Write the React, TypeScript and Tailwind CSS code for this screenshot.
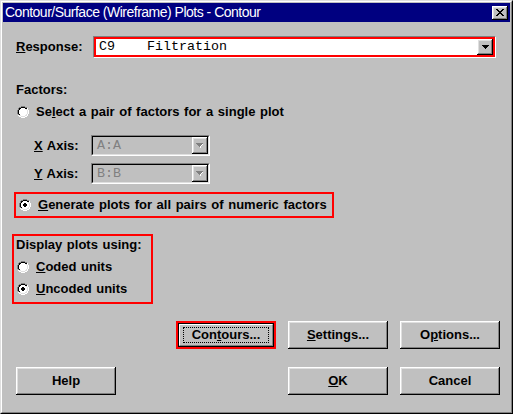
import type { ReactNode } from "react";

const pal: Record<string, string> = {
  G: "#808080",
  K: "#000000",
  W: "#ffffff",
  L: "#dfdfdf",
  H: "#ffffff",
};

function PixelArt({ map }: { map: string[] }) {
  const w = map[0].length;
  const h = map.length;
  const rects: ReactNode[] = [];
  map.forEach((row, y) =>
    row.split("").forEach((c, x) => {
      if (pal[c])
        rects.push(
          <rect key={`${x}-${y}`} x={x} y={y} width={1} height={1} fill={pal[c]} />
        );
    })
  );
  return (
    <svg
      width={w}
      height={h}
      viewBox={`0 0 ${w} ${h}`}
      shapeRendering="crispEdges"
      className="block shrink-0"
    >
      {rects}
    </svg>
  );
}

const radioOff = [
  "....GGGG....",
  "..GGKKKKGG..",
  ".GKKWWWWKKH.",
  ".GKWWWWWWLH.",
  "GKWWWWWWWWLH",
  "GKWWWWWWWWLH",
  "GKWWWWWWWWLH",
  "GKWWWWWWWWLH",
  ".GKWWWWWWLH.",
  ".HLLWWWWLLH.",
  "..HHLLLLHH..",
  "....HHHH....",
];

const radioOn = [
  "....GGGG....",
  "..GGKKKKGG..",
  ".GKKWWWWKKH.",
  ".GKWWWWWWLH.",
  "GKWWWKKWWWLH",
  "GKWWKKKKWWLH",
  "GKWWKKKKWWLH",
  "GKWWWKKWWWLH",
  ".GKWWWWWWLH.",
  ".HLLWWWWLLH.",
  "..HHLLLLHH..",
  "....HHHH....",
];

const closeX = [
  "KK....KK",
  ".KK..KK.",
  "..KKKK..",
  "...KK...",
  "..KKKK..",
  ".KK..KK.",
  "KK....KK",
];

const arrow = ["KKKKKKK", ".KKKKK.", "..KKK..", "...K..."];
const arrowOff = [
  "GGGGGGG.",
  ".GGGGGW.",
  "..GGGW..",
  "...GW...",
  "....W...",
];

const raised =
  "shadow-[inset_-1px_-1px_0_#000,inset_1px_1px_0_#fff,inset_-2px_-2px_0_#808080,inset_2px_2px_0_#dfdfdf]";
const raisedBtn =
  "shadow-[inset_-1px_-1px_0_#000,inset_1px_1px_0_#fff,inset_-2px_-2px_0_#808080,inset_2px_2px_0_#dfdfdf]";

function Radio({ checked }: { checked?: boolean }) {
  return <PixelArt map={checked ? radioOn : radioOff} />;
}

function DropBtn({ disabled }: { disabled?: boolean }) {
  return (
    <div
      className={`flex h-full w-[16px] shrink-0 items-center justify-center bg-[#c0c0c0] ${raised}`}
    >
      <PixelArt map={disabled ? arrowOff : arrow} />
    </div>
  );
}

function Combo({ value }: { value: string }) {
  return (
    <div className="h-[21px] w-[119px] border border-t-[#808080] border-l-[#808080] border-b-white border-r-white">
      <div className="flex h-full border border-t-black border-l-black border-b-[#dfdfdf] border-r-[#dfdfdf] bg-[#c0c0c0]">
        <span className="flex-1 whitespace-pre pl-[4px] font-['Liberation_Mono',monospace] text-[13.33px] leading-[17px] text-[#808080] [word-spacing:0px]">
          {value}
        </span>
        <DropBtn disabled />
      </div>
    </div>
  );
}

function Btn({ children }: { children: ReactNode }) {
  return (
    <div
      className={`flex h-[28px] w-[100px] items-center justify-center bg-[#c0c0c0] text-[13px] font-bold leading-[16px] ${raisedBtn}`}
    >
      {children}
    </div>
  );
}

export default function App() {
  return (
    <div className="h-[414px] w-[513px] border border-t-[#dfdfdf] border-l-[#dfdfdf] border-b-black border-r-black bg-[#c0c0c0] font-['Liberation_Sans',Arial,sans-serif] text-black [word-spacing:1px]">
      <div className="flex h-full flex-col border border-t-white border-l-white border-b-[#808080] border-r-[#808080] p-px">
        {/* title bar */}
        <div className="flex h-[19px] shrink-0 items-center bg-[#000080] pl-[2px] pr-[2px]">
          <span className="flex-1 text-[14px] leading-[19px] tracking-[-0.5px] text-white [word-spacing:0px]">
            Contour/Surface (Wireframe) Plots - Contour
          </span>
          <div
            className={`flex h-[14px] w-[16px] shrink-0 items-center justify-center bg-[#c0c0c0] ${raised}`}
          >
            <PixelArt map={closeX} />
          </div>
        </div>

        {/* response */}
        <div className="mt-[14px] flex h-[22px] items-center">
          <span className="ml-[13px] w-[77px] text-[13px] font-bold leading-[16px]">
            <u>R</u>esponse:
          </span>
          <div className="h-[22px] w-[403px] border border-t-[#808080] border-l-[#808080] border-b-white border-r-white">
            <div className="flex h-full border-2 border-[#ff0000] bg-white">
              <span className="flex-1 whitespace-pre pl-[3px] font-['Liberation_Mono',monospace] text-[13.33px] leading-[16px] [word-spacing:0px]">
                {"C9    Filtration"}
              </span>
              <DropBtn />
            </div>
          </div>
        </div>

        {/* factors */}
        <div className="ml-[13px] mt-[24px] text-[13px] font-bold leading-[16px]">
          Factors:
        </div>
        <div className="ml-[14px] mt-[6px] flex h-[16px] items-center gap-[7px] text-[13px] font-bold leading-[16px]">
          <Radio />
          <span>
            Se<u>l</u>ect a pair of factors for a single plot
          </span>
        </div>

        <div className="mt-[15px] flex h-[21px] items-center">
          <span className="ml-[31px] w-[57px] text-[13px] font-bold leading-[16px]">
            <u>X</u> Axis:
          </span>
          <Combo value="A:A" />
        </div>
        <div className="mt-[7px] flex h-[21px] items-center">
          <span className="ml-[31px] w-[57px] text-[13px] font-bold leading-[16px]">
            <u>Y</u> Axis:
          </span>
          <Combo value="B:B" />
        </div>

        {/* generate */}
        <div className="ml-[11px] mt-[8px] flex h-[26px] w-[320px] items-center gap-[7px] border-2 border-[#ff0000] pl-[3px] text-[13px] font-bold leading-[16px]">
          <Radio checked />
          <span>
            <u>G</u>enerate plots for all pairs of numeric factors
          </span>
        </div>

        {/* display */}
        <div className="ml-[9px] mt-[16px] flex h-[70px] w-[141px] flex-col border-2 border-[#ff0000] pl-[2px] pt-px text-[13px] font-bold leading-[16px]">
          <span>Display plots using:</span>
          <div className="ml-px mt-[6px] flex items-center gap-[7px]">
            <Radio />
            <span>
              <u>C</u>oded units
            </span>
          </div>
          <div className="ml-px mt-[6px] flex items-center gap-[7px]">
            <Radio checked />
            <span>
              <u>U</u>ncoded units
            </span>
          </div>
        </div>

        {/* buttons */}
        <div className="ml-[173px] mt-[17px] flex gap-[12px]">
          <div className="h-[28px] w-[100px] border-2 border-[#ff0000]">
            <div className="h-full border border-black bg-[#c0c0c0]">
              <div className="h-full border border-t-white border-l-white border-b-[#808080] border-r-[#808080] px-[3px] py-[2px]">
                <div className="flex h-full items-center justify-center border border-dotted border-black text-[13px] font-bold leading-[16px]">
                  Con<u>t</u>ours...
                </div>
              </div>
            </div>
          </div>
          <Btn>
            <u>S</u>ettings...
          </Btn>
          <Btn>
            O<u>p</u>tions...
          </Btn>
        </div>

        <div className="ml-[13px] mt-[18px] flex">
          <Btn>Help</Btn>
          <div className="ml-[172px] flex gap-[12px]">
            <Btn>
              <u>O</u>K
            </Btn>
            <Btn>Cancel</Btn>
          </div>
        </div>
      </div>
    </div>
  );
}
